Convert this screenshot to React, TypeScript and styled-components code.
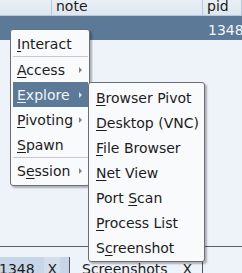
import { ReactElement } from 'react';
import styled, { createGlobalStyle } from 'styled-components';

const GlobalStyle = createGlobalStyle`
  html, body {
    margin: 0;
    padding: 0;
    background: #eef2f9;
  }
  body {
    font-family: 'DejaVu Sans', 'Liberation Sans', sans-serif;
    font-size: 14px;
  }
`;

type Item = { label: string; key: number; sub?: boolean };

const mainItems: (Item | 'sep')[] = [
  { label: 'Interact', key: 0 },
  'sep',
  { label: 'Access', key: 0, sub: true },
  { label: 'Explore', key: 0, sub: true },
  { label: 'Pivoting', key: 0, sub: true },
  { label: 'Spawn', key: 0 },
  'sep',
  { label: 'Session', key: 1, sub: true },
];

const exploreItems: Item[] = [
  { label: 'Browser Pivot', key: 0 },
  { label: 'Desktop (VNC)', key: 0 },
  { label: 'File Browser', key: 0 },
  { label: 'Net View', key: 0 },
  { label: 'Port Scan', key: 5 },
  { label: 'Process List', key: 0 },
  { label: 'Screenshot', key: 1 },
];

// underline the mnemonic letter like swing does
const Mnemonic = ({ label, index }: { label: string; index: number }): ReactElement => (
  <span>
    {label.slice(0, index)}
    <u>{label[index]}</u>
    {label.slice(index + 1)}
  </span>
);

const App = (): ReactElement => {
  return (
    <Frame>
      <GlobalStyle />
      <Header>
        <HeadCell width={52} />
        <HeadCell width={151}>note</HeadCell>
        <HeadCell>pid</HeadCell>
      </Header>
      <SelectedRow>
        <RowCell width={52} />
        <RowCell width={151} />
        <RowCell>1348</RowCell>
      </SelectedRow>
      <Body />
      <Divider />
      <TabBar>
        <Tab active>
          <TabLabel>1348</TabLabel>
          <CloseBox>X</CloseBox>
        </Tab>
        <Tab>
          <TabLabel>Screenshots</TabLabel>
          <CloseBox plain>X</CloseBox>
        </Tab>
      </TabBar>

      <Menu top={29} left={10} width={80}>
        {mainItems.map((item, i) =>
          item === 'sep' ? (
            <Separator key={`s${i}`} />
          ) : (
            <MenuItem key={item.label} selected={item.label === 'Explore'}>
              <Mnemonic label={item.label} index={item.key} />
              {item.sub && <Arrow selected={item.label === 'Explore'} />}
            </MenuItem>
          ),
        )}
      </Menu>

      <Menu top={82} left={88} width={117} sub>
        {exploreItems.map((item) => (
          <MenuItem key={item.label} sub>
            <Mnemonic label={item.label} index={item.key} />
          </MenuItem>
        ))}
      </Menu>
    </Frame>
  );
};

const Frame = styled.div`
  position: relative;
  width: 242px;
  height: 273px;
  overflow: hidden;
  display: flex;
  flex-direction: column;
  background: #eef2f9;
  color: #1c1c1c;
`;

const Header = styled.div`
  display: flex;
  height: 15px;
  border-bottom: 1px solid #b9c9dc;
  background: linear-gradient(#eaeff6, #dfe6ef);
  flex-shrink: 0;
`;

const HeadCell = styled.div<{ width?: number }>`
  width: ${({ width }): string => (width ? `${width}px` : 'auto')};
  flex: ${({ width }): string => (width ? '0 0 auto' : '1')};
  box-sizing: border-box;
  padding-left: 4px;
  line-height: 12px;
  border-right: 1px solid #b9c9dc;
  white-space: nowrap;
  overflow: hidden;
`;

const SelectedRow = styled.div`
  display: flex;
  height: 24px;
  background: #5c7998;
  color: #f4f6f9;
  flex-shrink: 0;
`;

const RowCell = styled.div<{ width?: number }>`
  width: ${({ width }): string => (width ? `${width}px` : 'auto')};
  flex: ${({ width }): string => (width ? '0 0 auto' : '1')};
  box-sizing: border-box;
  padding: 6px 0 0 5px;
  line-height: 16px;
  white-space: nowrap;
`;

const Body = styled.div`
  flex: 1;
`;

const Divider = styled.div`
  height: 1px;
  background: #5a5f66;
  margin-bottom: 10px;
  flex-shrink: 0;
`;

const TabBar = styled.div`
  display: flex;
  height: 16px;
  flex-shrink: 0;
`;

const Tab = styled.div<{ active?: boolean }>`
  display: flex;
  align-items: flex-start;
  box-sizing: border-box;
  width: ${({ active }): string => (active ? '71px' : '133px')};
  padding: 4px 0 0 ${({ active }): string => (active ? '0' : '12px')};
  background: ${({ active }): string => (active ? '#c7d5e8' : '#eef2f9')};
  border-right: 1px solid #4c5561;
  margin-left: ${({ active }): string => (active ? '-1px' : '0')};
  line-height: 16px;
  white-space: nowrap;
`;

const TabLabel = styled.span`
  flex: 1;
`;

const CloseBox = styled.span<{ plain?: boolean }>`
  margin-top: -4px;
  padding: 4px 3px 0;
  margin-right: ${({ plain }): string => (plain ? '7px' : '9px')};
  background: ${({ plain }): string => (plain ? 'transparent' : '#d3ddeb')};
`;

const Menu = styled.div<{ top: number; left: number; width: number; sub?: boolean }>`
  position: absolute;
  top: ${({ top }): number => top}px;
  left: ${({ left }): number => left}px;
  width: ${({ width }): number => width}px;
  box-sizing: border-box;
  padding: ${({ sub }): string => (sub ? '2px 1px 1px 1px' : '1px 1px 2px 2px')};
  background: #f9fafc;
  border: 1px solid #6b6f74;
  border-radius: 3px;
  box-shadow: 2px 2px 2px rgba(0, 0, 0, 0.28);
  display: flex;
  flex-direction: column;
`;

const MenuItem = styled.div<{ selected?: boolean; sub?: boolean }>`
  display: flex;
  align-items: center;
  justify-content: space-between;
  height: 25px;
  box-sizing: border-box;
  padding: 1px 6px 0 ${({ sub }): string => (sub ? '6px' : '4px')};
  line-height: 24px;
  white-space: nowrap;
  background: ${({ selected }): string => (selected ? '#5c7998' : 'transparent')};
  color: ${({ selected }): string => (selected ? '#f1f4f8' : '#1c1c1c')};

  u {
    text-decoration-thickness: 1px;
    text-underline-offset: 2px;
  }
`;

const Arrow = styled.span<{ selected?: boolean }>`
  width: 0;
  height: 0;
  border-top: 3px solid transparent;
  border-bottom: 3px solid transparent;
  border-left: 3px solid ${({ selected }): string => (selected ? '#d8dfe8' : '#7d8187')};
`;

const Separator = styled.div`
  height: 1px;
  background: #c5c9ce;
`;

export default App;
